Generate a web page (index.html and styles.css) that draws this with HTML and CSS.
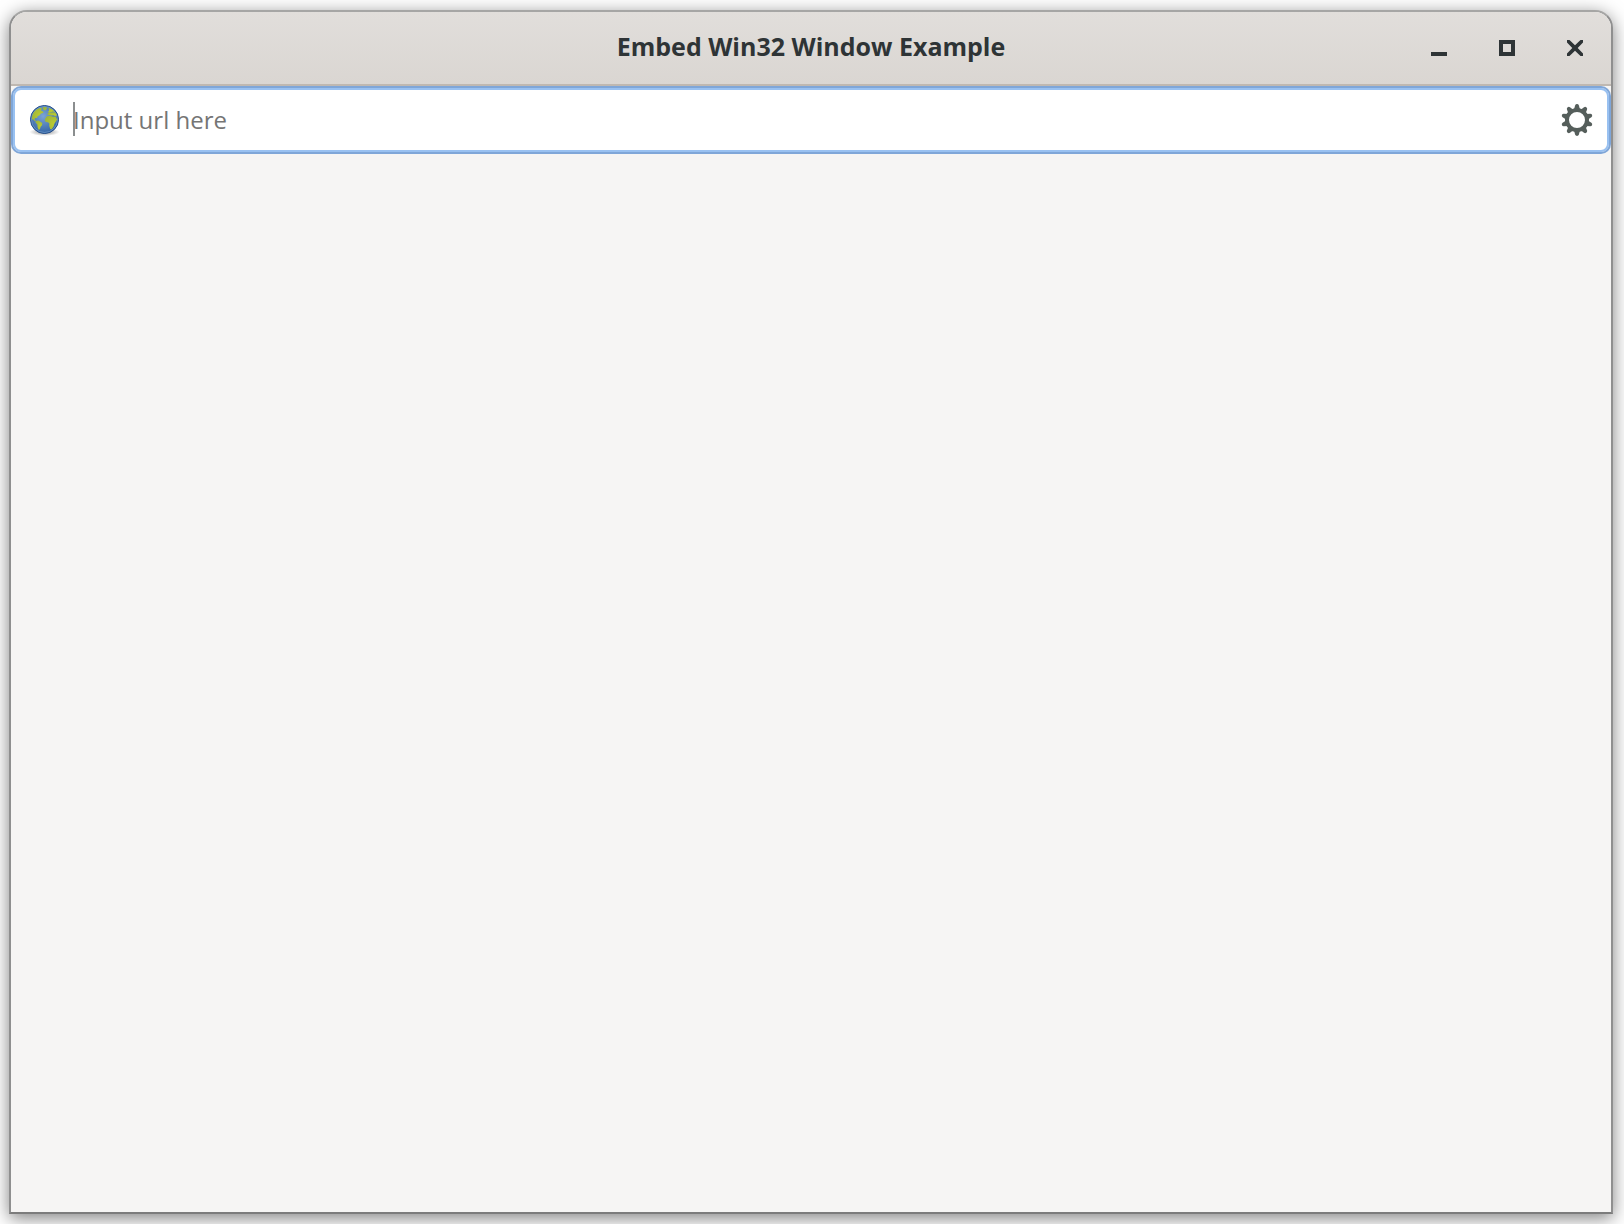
FILE: index.html
```html
<!DOCTYPE html>
<html lang="en">
<head>
<meta charset="utf-8">
<title>Embed Win32 Window Example</title>
<link rel="stylesheet" href="styles.css">
</head>
<body>
<div class="window">
  <header class="titlebar">
    <h1 class="title">Embed Win32 Window Example</h1>
    <div class="controls">
      <button class="control" type="button" aria-label="Minimize"><svg width="16" height="16" viewBox="0 0 16 16"><path d="M0 12h16v4H0z"/></svg></button>
      <button class="control" type="button" aria-label="Maximize"><svg width="16" height="16" viewBox="0 0 16 16"><path fill-rule="evenodd" d="M0 0h16v16H0zM4 4v8h8V4z"/></svg></button>
      <button class="control" type="button" aria-label="Close"><svg width="16" height="16" viewBox="0 0 16 16"><path d="M0 0h2.500L8 5.300 13.500 0H16v2.500L10.700 8 16 13.500V16h-2.500L8 10.700 2.500 16H0v-2.500L5.300 8 0 2.500z"/></svg></button>
    </div>
  </header>
  <main class="content">
    <form class="entry">
      <svg class="icon" viewBox="0 0 32 32" aria-hidden="true">
        <defs>
          <radialGradient id="sea" cx="45%" cy="38%" r="62%">
            <stop offset="0" stop-color="#7ba4d6"/>
            <stop offset="1" stop-color="#3465a4"/>
          </radialGradient>
          <radialGradient id="shade">
            <stop offset="0" stop-color="#000" stop-opacity=".45"/>
            <stop offset="1" stop-color="#000" stop-opacity="0"/>
          </radialGradient>
          <radialGradient id="land" cx="70%" cy="60%" r="75%">
            <stop offset="0" stop-color="#bccb30"/>
            <stop offset="1" stop-color="#9db43c"/>
          </radialGradient>
        </defs>
        <ellipse cx="16.500" cy="28" rx="15" ry="4" fill="url(#shade)"/>
        <circle cx="16.500" cy="15.500" r="14" fill="url(#sea)" stroke="#204a87"/>
        <circle cx="16.500" cy="15.500" r="13" fill="none" stroke="#739cca" stroke-opacity=".7"/>
        <g fill="url(#land)">
          <path d="M3.800 14.500C4 10.500 6 7 9 5.200l3.500-1.400 1.500.8-1.200 1.800 1.800.8 1 1.500-2.500.8-1.600 1.800-2 1.200-.5 1.600-1.800-.2-.8 1.400 1.400 1.200-1.300.4-1.500-2-.8 1z"/>
          <path d="M7.500 17l3-.6 1.800 1.400 2 1.200-.2 2.200-1.500 1.600-.6 2.200-1.200 1-1.200-2.600-.2-2.800-1.900-2z"/>
          <path d="M14.500 3.300l3.500-.2 1.200 1-2 2.400-1.800-.8zM20.500 3.800l4.300 2 2.200 2.600-2.300-.8-1.700.8-1.800.6-1.200-1.200 1.200-1.200z"/>
          <path d="M19 10.200l1.800-1.800 1.600.6 1.800-.8 3.200.4 1.600 2.600-1.600 1-2.200-1-1.800.2-2.400-.4z"/>
          <path d="M17.200 14.500l1.800-2.300 3-.4 2.800.9 2.700-.2 1.800 3-1.600 2.200-1.300 2-.8 2.800-2 2.800-1.400-.2-1-3.400.2-2.300-1.400-1.200-2.200-.2-1-1.700z"/>
        </g>
      </svg>
      <div class="field">
        <input class="url" type="text" aria-label="URL" placeholder="Input url here">
        <span class="caret"></span>
      </div>
      <button class="settings" type="button" aria-label="Settings">
        <svg class="icon" viewBox="-16 -16 32 32">
          <defs><path id="tooth" d="M-3-10.500L-1.900-14.500a2 2 0 0 1 3.800 0L3-10.500z"/></defs>
          <g fill="#555e5b">
            <use href="#tooth"/>
            <use href="#tooth" transform="rotate(36)"/>
            <use href="#tooth" transform="rotate(72)"/>
            <use href="#tooth" transform="rotate(108)"/>
            <use href="#tooth" transform="rotate(144)"/>
            <use href="#tooth" transform="rotate(180)"/>
            <use href="#tooth" transform="rotate(216)"/>
            <use href="#tooth" transform="rotate(252)"/>
            <use href="#tooth" transform="rotate(288)"/>
            <use href="#tooth" transform="rotate(324)"/>
          </g>
          <circle r="10" fill="none" stroke="#555e5b" stroke-width="4"/>
        </svg>
      </button>
    </form>
  </main>
</div>
</body>
</html>
```
FILE: styles.css
```css
* {
  box-sizing: border-box;
}

body {
  display: flex;
  min-height: 100vh;
  margin: 0;
  padding: 10px 11px 10px 9px;
  overflow: hidden;
  background: #fff;
  font-family: "Open Sans", "Noto Sans", sans-serif;
}

.window {
  display: flex;
  flex: 1;
  flex-direction: column;
  border: 2px solid #8f8f8f;
  border-top-color: #a6a6a5;
  border-bottom-color: #7c7c7c;
  border-radius: 18px 18px 0 0;
  background: #f6f5f4;
  background-clip: padding-box;
  box-shadow: 0 4px 18px rgba(0, 0, 0, 0.5);
}

.titlebar {
  display: grid;
  grid-template-columns: 1fr auto 1fr;
  align-items: center;
  height: 74px;
  padding: 0 12px;
  border-bottom: 2px solid #bfb8b1;
  border-radius: 16px 16px 0 0;
  background: linear-gradient(#e1dedb, #dad6d2);
}

.title {
  grid-column: 2;
  margin: 0;
  padding-bottom: 4px;
  color: #2e3436;
  font-size: 25px;
  font-weight: 700;
  line-height: 36px;
}

.controls {
  display: flex;
  justify-content: flex-end;
  gap: 20px;
}

.control {
  display: flex;
  align-items: center;
  justify-content: center;
  width: 48px;
  height: 48px;
  padding: 0;
  border: 0;
  background: none;
  fill: #2e3436;
}

.content {
  flex: 1;
}

.entry {
  display: flex;
  align-items: center;
  gap: 13px;
  height: 68px;
  padding: 0 16px 0 15px;
  border: 2px solid #7fa6d8;
  border-radius: 10px;
  background: #fff;
  box-shadow: inset 0 0 0 2px #99c1f1;
}

.icon {
  display: block;
  flex: none;
  width: 32px;
  height: 32px;
}

.field {
  position: relative;
  flex: 1;
}

.url {
  display: block;
  width: 100%;
  height: 36px;
  padding: 0 0 2px;
  border: 0;
  outline: 0;
  background: none;
  color: #2e3436;
  font: 24px/34px "Open Sans", "Noto Sans", sans-serif;
}

.url::placeholder {
  color: #757575;
  opacity: 1;
}

.caret {
  position: absolute;
  top: 0;
  left: 0;
  width: 2px;
  height: 34px;
  background: #8b8e8f;
}

.settings {
  padding: 0;
  border: 0;
  background: none;
}
```
